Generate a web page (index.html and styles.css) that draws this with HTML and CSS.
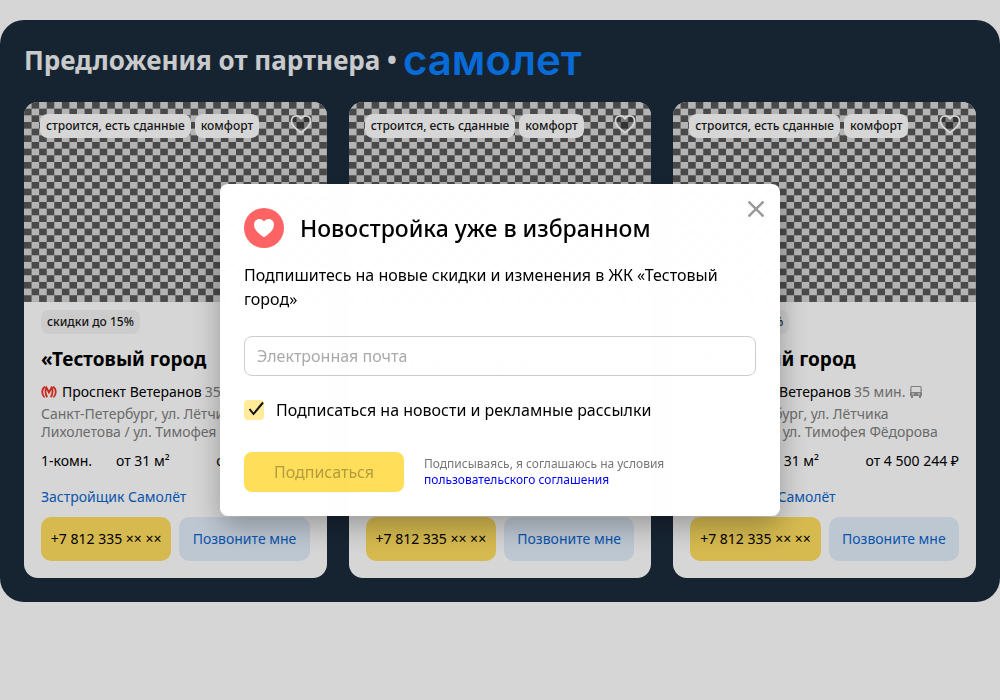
FILE: index.html
```html
<!DOCTYPE html>
<html lang="ru">
<head>
<meta charset="utf-8">
<meta name="viewport" content="width=device-width, initial-scale=1">
<title>Предложения от партнера</title>
<link rel="stylesheet" href="styles.css">
</head>
<body>
<svg class="sprite" aria-hidden="true">
  <symbol id="fav" viewBox="0 0 24 24"><path d="M12 18.500C8 15.600 2.500 12 2.500 6.900C2.500 3.800 4.800 1.800 7.300 1.800C9.500 1.800 11 3.100 12 4.700C13 3.100 14.500 1.800 16.700 1.800C19.200 1.800 21.500 3.800 21.500 6.900C21.500 12 16 15.600 12 18.500Z" fill="rgba(0,0,0,.3)" stroke="#fff" stroke-width="1.800" stroke-linejoin="round"/></symbol>
  <symbol id="metro" viewBox="0 0 16 12"><path d="M4 .7C.4 3 .4 8.500 3.600 11.200M12 .7C15.600 3 15.600 8.500 12.400 11.200M6.200 11.200C4.200 8 4.200 4 5.400 1.500L8 6.500L10.600 1.500C11.800 4 11.800 8 9.800 11.200" fill="none" stroke="#ef3124" stroke-width="1.800"/></symbol>
  <symbol id="bus" viewBox="0 0 12 12"><path d="M1 .5H11V7.500H1ZM.5 5H0V2M11.500 5H12V2" fill="none" stroke="#999" stroke-width="1"/><path d="M0 6H12V10H0ZM1 10H3V12H1ZM9 10H11V12H9Z" fill="#999"/><path d="M2 7.500H4V8.500H2ZM8 7.500H10V8.500H8Z" fill="#fff"/></symbol>
</svg>
<main class="offers">
  <h1 class="offers-title"><span>Предложения от партнера •</span><span class="logo">самолет</span></h1>
  <div class="cards">
    <article class="card">
      <div class="photo"><div class="tags"><span class="tag">строится, есть сданные</span><span class="tag">комфорт</span></div><button class="fav" aria-label="В избранное"><svg><use href="#fav"/></svg></button></div>
      <div class="info">
        <span class="discount">скидки до 15%</span>
        <h2 class="name">«Тестовый город</h2>
        <p class="metro"><svg class="metro-icon"><use href="#metro"/></svg>Проспект Ветеранов <span class="muted">35 мин.</span><svg class="bus-icon"><use href="#bus"/></svg></p>
        <p class="address">Санкт-Петербург, ул. Лётчика<br>Лихолетова / ул. Тимофея Фёдорова</p>
        <div class="flat"><span class="rooms">1-комн.</span><span>от 31 м²</span><span class="price">от 4 500 244 ₽</span></div>
        <a class="developer" href="#">Застройщик Самолёт</a>
        <div class="actions"><button class="phone">+7 812 335 ×× ××</button><button class="call">Позвоните мне</button></div>
      </div>
    </article>
    <article class="card">
      <div class="photo"><div class="tags"><span class="tag">строится, есть сданные</span><span class="tag">комфорт</span></div><button class="fav" aria-label="В избранное"><svg><use href="#fav"/></svg></button></div>
      <div class="info">
        <span class="discount">скидки до 15%</span>
        <h2 class="name">«Тестовый город</h2>
        <p class="metro"><svg class="metro-icon"><use href="#metro"/></svg>Проспект Ветеранов <span class="muted">35 мин.</span><svg class="bus-icon"><use href="#bus"/></svg></p>
        <p class="address">Санкт-Петербург, ул. Лётчика<br>Лихолетова / ул. Тимофея Фёдорова</p>
        <div class="flat"><span class="rooms">1-комн.</span><span>от 31 м²</span><span class="price">от 4 500 244 ₽</span></div>
        <a class="developer" href="#">Застройщик Самолёт</a>
        <div class="actions"><button class="phone">+7 812 335 ×× ××</button><button class="call">Позвоните мне</button></div>
      </div>
    </article>
    <article class="card">
      <div class="photo"><div class="tags"><span class="tag">строится, есть сданные</span><span class="tag">комфорт</span></div><button class="fav" aria-label="В избранное"><svg><use href="#fav"/></svg></button></div>
      <div class="info">
        <span class="discount">скидки до 15%</span>
        <h2 class="name">«Тестовый город</h2>
        <p class="metro"><svg class="metro-icon"><use href="#metro"/></svg>Проспект Ветеранов <span class="muted">35 мин.</span><svg class="bus-icon"><use href="#bus"/></svg></p>
        <p class="address">Санкт-Петербург, ул. Лётчика<br>Лихолетова / ул. Тимофея Фёдорова</p>
        <div class="flat"><span class="rooms">1-комн.</span><span>от 31 м²</span><span class="price">от 4 500 244 ₽</span></div>
        <a class="developer" href="#">Застройщик Самолёт</a>
        <div class="actions"><button class="phone">+7 812 335 ×× ××</button><button class="call">Позвоните мне</button></div>
      </div>
    </article>
  </div>
</main>
<div class="overlay">
  <form class="modal" role="dialog" aria-labelledby="modal-title">
    <button class="close" type="button" aria-label="Закрыть"><svg viewBox="0 0 16 16"><path d="M.5.5L15.500 15.500M15.500.5L.5 15.500" stroke="#999" stroke-width="2.400"/></svg></button>
    <div class="modal-head">
      <svg class="badge" viewBox="0 0 40 40"><circle cx="20" cy="20" r="20" fill="#ff6464"/><path d="M20 29.200C16 26.400 10 22.500 10 16.700C10 13.400 12.200 11 15.300 11C17.400 11 19 12 20 13.800C21 12 22.600 11 24.700 11C27.800 11 30 13.400 30 16.700C30 22.500 24 26.400 20 29.200Z" fill="#fff"/></svg>
      <h2 class="modal-title" id="modal-title">Новостройка уже в избранном</h2>
    </div>
    <p class="lead">Подпишитесь на новые скидки и изменения в ЖК «Тестовый город»</p>
    <input class="email" type="email" placeholder="Электронная почта" aria-label="Электронная почта">
    <label class="agree"><span class="box"><input type="checkbox" checked><svg viewBox="0 0 20 20"><path d="M5.500 9L9.500 14L19 2.500" fill="none" stroke="#111" stroke-width="2"/></svg></span>Подписаться на новости и рекламные рассылки</label>
    <div class="modal-foot">
      <button class="submit" type="submit" disabled>Подписаться</button>
      <p class="terms">Подписываясь, я соглашаюсь на условия<br><a href="#">пользовательского соглашения</a></p>
    </div>
  </form>
</div>
</body>
</html>
```

FILE: styles.css
```css
* { box-sizing: border-box; }
body { margin: 0; padding: 20px 0; background: #fff; color: #000; font: 14px/18px "Noto Sans", "Open Sans", sans-serif; }
h1, h2, p { margin: 0; }
button, input { font: inherit; }
button { border: 0; padding: 0; cursor: pointer; }
svg { display: block; }
.sprite { position: absolute; width: 0; height: 0; }

.offers { background: #1b2b3c; border-radius: 24px; padding: 20px 24px 24px; }
.offers-title { display: flex; align-items: center; gap: 6px; height: 40px; margin-bottom: 22px; color: #eff1f3; font-size: 26px; line-height: 40px; font-weight: 700; white-space: nowrap; }
.logo { color: #0a80ff; font: 600 42px/40px Inter, sans-serif; }
.cards { display: grid; grid-template-columns: repeat(3, minmax(0, 1fr)); gap: 22px; }
.card { background: #fff; border-radius: 14px; overflow: hidden; }
.photo { display: flex; justify-content: space-between; height: 200px; padding: 12px 14px 0 16px; background: conic-gradient(#585858 25%, #d7d7d7 0 50%, #585858 0 75%, #d7d7d7 0) 0 0 / calc(100% / 20) calc(100% / 15); }
.tags { display: flex; gap: 4px; }
.tag, .discount { display: block; height: 24px; padding: 0 6px; border-radius: 8px; background: #fff; color: #1a1a1a; font-size: 12px; line-height: 24px; font-weight: 500; white-space: nowrap; }
.fav { width: 24px; height: 24px; background: none; }
.fav svg { width: 24px; height: 24px; }
.info { display: flex; flex-direction: column; align-items: flex-start; padding: 8px 17px 17px; }
.discount { background: #f3f3f3; }
.name { margin-top: 11px; font-size: 19px; line-height: 28px; font-weight: 700; }
.metro { display: flex; align-items: center; margin: 8px 0 2px; line-height: 22px; white-space: nowrap; }
.metro-icon { width: 16px; height: 12px; margin-right: 5px; }
.bus-icon { width: 12px; height: 12px; margin-left: 5px; }
.muted { margin-left: 3px; color: #808080; }
.address { color: #808080; white-space: nowrap; }
.flat { display: grid; grid-template-columns: 75px 1fr auto; width: 100%; margin-top: 10px; line-height: 20px; white-space: nowrap; }
.developer { margin-top: 16px; color: #0b66cf; line-height: 20px; text-decoration: none; }
.actions { display: grid; grid-template-columns: 1fr 1fr; gap: 8px; width: 100%; margin-top: 10px; }
.phone, .call { height: 44px; border-radius: 10px; white-space: nowrap; }
.phone { background: #ffde5f; color: #000; }
.call { background: #e2eefb; color: #0b66cf; }

.overlay { position: fixed; inset: 0; display: flex; align-items: center; justify-content: center; padding: 16px; background: rgba(0, 0, 0, .16); }
.modal { position: relative; width: 100%; max-width: 560px; padding: 24px; border-radius: 8px; background: #fff; box-shadow: 0 10px 30px rgba(0, 0, 0, .3); opacity: .995; font-size: 16px; line-height: 24px; }
.close { position: absolute; top: 17px; right: 16px; background: none; }
.close svg { width: 16px; height: 16px; }
.modal-head { display: flex; align-items: center; gap: 16px; }
.badge { width: 40px; height: 40px; }
.modal-title { font-size: 23px; line-height: 40px; font-weight: 500; }
.lead { margin-top: 15px; }
.email { display: block; width: 100%; height: 40px; margin-top: 25px; padding: 0 12px; border: 1px solid #ccc; border-radius: 8px; background: #fff; }
.email::placeholder { color: #aaa; }
.agree { display: flex; align-items: center; gap: 12px; margin-top: 22px; }
.box { position: relative; width: 20px; height: 20px; }
.box input { appearance: none; display: block; width: 20px; height: 20px; margin: 0; border-radius: 4px; background: #ffeb99; }
.box svg { position: absolute; inset: 0; pointer-events: none; }
.modal-foot { display: flex; align-items: center; gap: 20px; margin-top: 30px; }
.submit { width: 160px; height: 40px; border-radius: 8px; background: #ffdf5a; color: #b39c40; }
.terms { color: #777; font-size: 12px; line-height: 16px; }
.terms a { color: #00f; text-decoration: none; }
```
